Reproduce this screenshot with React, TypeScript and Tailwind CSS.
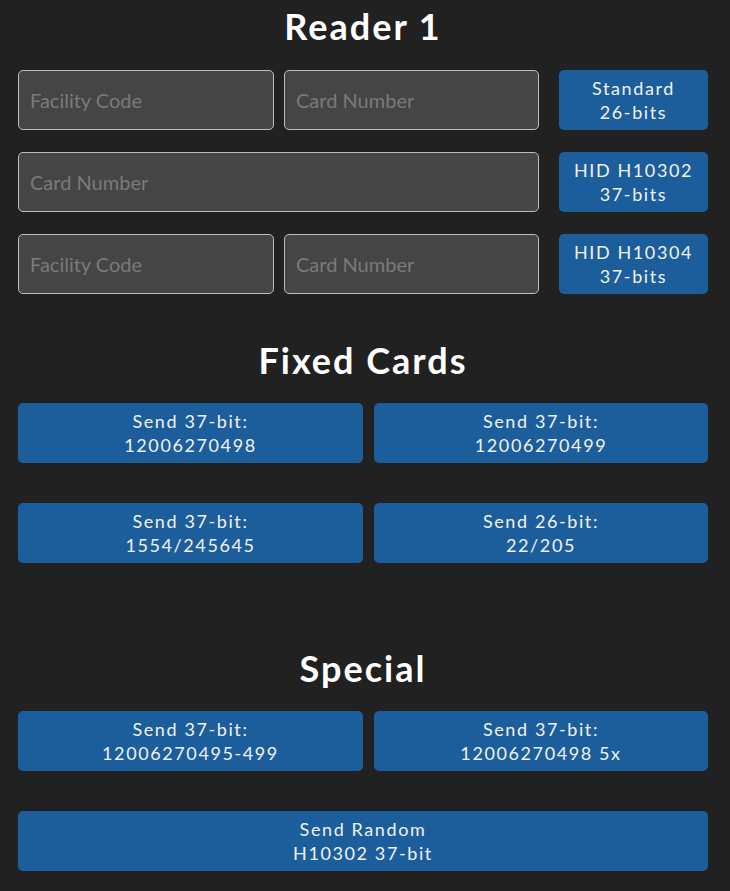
import React from "react";

const font = { fontFamily: "Lato, 'Noto Sans', sans-serif" };

function Btn({ l1, l2, className }: { l1: string; l2: string; className?: string }) {
  return (
    <button
      className={
        "h-[60px] rounded-[5px] bg-[#1b5e9b] text-[#f2f2f2] text-[18px] leading-[24px] tracking-[1.6px] flex flex-col items-center justify-center " +
        (className || "")
      }
    >
      <span>{l1}</span>
      <span>{l2}</span>
    </button>
  );
}

function Input({ ph, className }: { ph: string; className?: string }) {
  return (
    <input
      placeholder={ph}
      className={
        "h-[60px] rounded-[5px] border border-[#bdbdbd] bg-[#454545] px-[11px] text-[20px] text-white placeholder:text-[#7a7a7a] outline-none " +
        (className || "")
      }
    />
  );
}

function Heading({ children, className }: { children: React.ReactNode; className?: string }) {
  return (
    <h1
      className={
        "text-center text-white font-bold text-[36px] leading-[40px] tracking-[2px] " + (className || "")
      }
    >
      {children}
    </h1>
  );
}

export default function App() {
  return (
    <div className="min-h-[891px] w-[730px] bg-[#212121]" style={font}>
      <div className="w-[690px] ml-[18px] pt-[6px]">
        <Heading>Reader 1</Heading>
        <div className="mt-[24px] flex flex-col gap-[22px]">
          <div className="flex items-center">
            <Input ph="Facility Code" className="w-[256px]" />
            <Input ph="Card Number" className="w-[255px] ml-[10px]" />
            <Btn l1="Standard" l2="26-bits" className="w-[149px] ml-[20px]" />
          </div>
          <div className="flex items-center">
            <Input ph="Card Number" className="w-[521px]" />
            <Btn l1="HID H10302" l2="37-bits" className="w-[149px] ml-[20px]" />
          </div>
          <div className="flex items-center">
            <Input ph="Facility Code" className="w-[256px]" />
            <Input ph="Card Number" className="w-[255px] ml-[10px]" />
            <Btn l1="HID H10304" l2="37-bits" className="w-[149px] ml-[20px]" />
          </div>
        </div>

        <Heading className="mt-[46px]">Fixed Cards</Heading>
        <div className="mt-[23px] flex flex-col gap-[40px]">
          <div className="flex gap-[11px]">
            <Btn l1="Send 37-bit:" l2="12006270498" className="w-[345px]" />
            <Btn l1="Send 37-bit:" l2="12006270499" className="flex-1" />
          </div>
          <div className="flex gap-[11px]">
            <Btn l1="Send 37-bit:" l2="1554/245645" className="w-[345px]" />
            <Btn l1="Send 26-bit:" l2="22/205" className="flex-1" />
          </div>
        </div>

        <Heading className="mt-[85px]">Special</Heading>
        <div className="mt-[23px] flex flex-col gap-[40px]">
          <div className="flex gap-[11px]">
            <Btn l1="Send 37-bit:" l2="12006270495-499" className="w-[345px]" />
            <Btn l1="Send 37-bit:" l2="12006270498 5x" className="flex-1" />
          </div>
          <Btn l1="Send Random" l2="H10302 37-bit" className="w-full" />
        </div>
      </div>
    </div>
  );
}
